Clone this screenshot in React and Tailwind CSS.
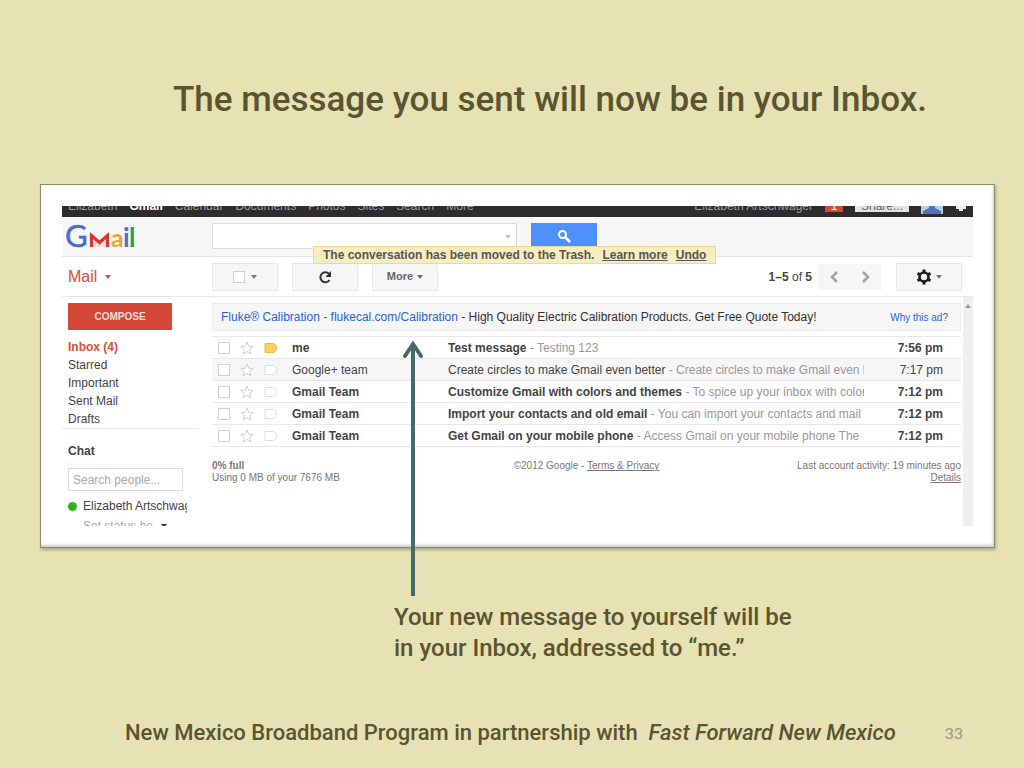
const navLinks = ['Elizabeth', 'Gmail', 'Calendar', 'Documents', 'Photos', 'Sites', 'Search', 'More']

const folders = ['Starred', 'Important', 'Sent Mail', 'Drafts']

const messages = [
  { id: 1, from: 'me', subject: 'Test message', snippet: 'Testing 123', time: '7:56 pm', unread: true, important: true },
  { id: 2, from: 'Google+ team', subject: 'Create circles to make Gmail even better', snippet: 'Create circles to make Gmail even b', time: '7:17 pm' },
  { id: 3, from: 'Gmail Team', subject: 'Customize Gmail with colors and themes', snippet: 'To spice up your inbox with color', time: '7:12 pm', unread: true },
  { id: 4, from: 'Gmail Team', subject: 'Import your contacts and old email', snippet: 'You can import your contacts and mail', time: '7:12 pm', unread: true },
  { id: 5, from: 'Gmail Team', subject: 'Get Gmail on your mobile phone', snippet: 'Access Gmail on your mobile phone The', time: '7:12 pm', unread: true },
]

function Caret({ className }) {
  return (
    <svg viewBox="0 0 6 4" className={`w-[6px] h-1 shrink-0 ${className}`} fill="currentColor">
      <path d="M0 0h6L3 4z" />
    </svg>
  )
}

function GmailLogo() {
  return (
    <svg viewBox="0 0 70 30" className="w-[70px] h-[30px]" fontFamily="Lato, sans-serif">
      <text x="-1" y="26" fontSize="31" fill="#4470cf" stroke="#4470cf" strokeWidth=".5">G</text>
      <path d="M25.500 26V14.500l8 7 8-7V26" fill="#f6dedb" stroke="#d8392f" strokeWidth="3.200" />
      <text x="45" y="26" fontSize="25" fontWeight="700" fill="#e3ab2c">a</text>
      <text x="57" y="26" fontSize="26" fontWeight="700" fill="#3f74d8">i</text>
      <text x="63" y="26" fontSize="26" fontWeight="700" fill="#2f9e4f">l</text>
    </svg>
  )
}

function Star() {
  return (
    <svg viewBox="0 0 14 14" className="w-[14px] h-[14px]" fill="#fff" stroke="#cfcfcf">
      <path d="M7 1l1.700 4.200 4.500.3-3.500 2.900 1.200 4.400L7 10.400l-3.900 2.400 1.200-4.400L.8 5.500l4.500-.3z" />
    </svg>
  )
}

function Tag({ important }) {
  return (
    <svg viewBox="0 0 14 10" className="w-[14px] h-[10px]" fill={important ? '#fbd160' : '#fff'} stroke={important ? '#e9b94c' : '#dcdcdc'}>
      <path d="M1 .5h8.500q1 0 1.600 1L13 5l-1.900 3.500q-.6 1-1.600 1H1z" />
    </svg>
  )
}

function Gear() {
  return (
    <svg viewBox="0 0 16 16" className="w-4 h-4" fill="none" stroke="#1c1c1c">
      <circle cx="8" cy="8" r="4.500" strokeWidth="2.600" />
      <path d="M8 .5v2.500M8 13v2.500M1.500 4.250l2.200 1.250M12.300 10.500l2.200 1.250M1.500 11.750l2.200-1.250M12.300 5.500l2.200-1.250" strokeWidth="3" />
    </svg>
  )
}

function TopBar() {
  return (
    <div className="h-[11px] overflow-hidden bg-[#2d2d2d] flex items-start justify-between px-[6px] text-[12px] leading-0 text-[#9c9c9c]">
      <nav className="flex gap-3">
        {navLinks.map((link) => (
          <a key={link} href="#" className={link === 'Gmail' ? 'font-bold text-white' : ''}>{link}</a>
        ))}
      </nav>
      <div className="flex items-start">
        <span className="mr-3">Elizabeth Artschwager</span>
        <span className="w-[18px] h-[6px] mr-3 bg-[#d14836] text-white text-center">1</span>
        <span className="w-[54px] h-[6px] mr-3 bg-[#e4e4e4] text-[#666] text-center">Share...</span>
        <svg viewBox="0 0 22 8" className="w-[22px] h-2 mr-3">
          <path d="M0 0h22v8H0z" fill="#b9cdec" />
          <path d="M8 0h6v2l6 3v3H2V5l6-3z" fill="#5474b4" />
        </svg>
        <svg viewBox="0 0 12 6" className="w-3 h-[6px]" fill="#eee">
          <path d="M1 0h10v3H8v2H4V3H1z" />
        </svg>
      </div>
    </div>
  )
}

function Header() {
  return (
    <div className="relative h-10 bg-[#f6f6f6] border-b border-[#e5e5e5] flex items-start">
      <div className="w-[150px] shrink-0 pl-1 pt-1">
        <GmailLogo />
      </div>
      <div className="relative w-[305px] mt-[6px]">
        <input aria-label="Search mail" className="block w-full h-[26px] bg-white border border-[#dcdcdc]" />
        <Caret className="absolute right-[6px] top-3 text-[#c4c4c4]" />
      </div>
      <button aria-label="Search" className="ml-[14px] mt-[6px] w-[66px] h-[26px] bg-[#4d90fe] flex items-center justify-center">
        <svg viewBox="0 0 14 14" className="w-[14px] h-[14px]" fill="none" stroke="#fff">
          <circle cx="5.500" cy="5.500" r="3.500" strokeWidth="2" />
          <path d="M8 8l5 5" strokeWidth="2.600" />
        </svg>
      </button>
      {/* Notification */}
      <div className="absolute left-[251px] top-[29px] h-[18px] px-[9px] bg-[#f9edbe] border border-[#f0d98c] text-[12px] leading-4 font-bold text-[#555] whitespace-nowrap">
        The conversation has been moved to the Trash.
        <a href="#" className="ml-2 underline">Learn more</a>
        <a href="#" className="ml-2 underline">Undo</a>
      </div>
    </div>
  )
}

function ToolButton({ children, label }) {
  return (
    <button aria-label={label} className="w-[66px] h-7 bg-[#f6f6f6] border border-[#e8e8e8] flex items-center justify-center gap-1 text-[11px] font-bold text-[#666]">
      {children}
    </button>
  )
}

function Toolbar() {
  return (
    <div className="h-10 border-b border-[#e8e8e8] flex items-center">
      <button className="w-[150px] shrink-0 pl-[6px] flex items-center gap-2 text-[16px] text-[#dd4b39]">
        Mail <Caret className="text-[#dd4b39]" />
      </button>
      <div className="flex gap-[14px]">
        <div className="w-[66px] h-7 bg-[#f6f6f6] border border-[#e8e8e8] flex items-center justify-center gap-[6px]">
          <input type="checkbox" aria-label="Select all" className="appearance-none w-3 h-3 border border-[#cfcfcf] bg-white" />
          <Caret className="text-[#777]" />
        </div>
        <ToolButton label="Refresh">
          <svg viewBox="0 0 14 14" className="w-[14px] h-[14px]" fill="none" stroke="#333" strokeWidth="2">
            <path d="M11.500 10A5 5 0 1 1 11 3.800" />
            <path d="M13 1v6H7.500z" fill="#333" stroke="none" />
          </svg>
        </ToolButton>
        <ToolButton>More <Caret className="text-[#666]" /></ToolButton>
      </div>
      <div className="ml-auto mr-[11px] flex items-center">
        <p className="mr-[6px] text-[12px] text-[#444]"><b>1–5</b> of <b>5</b></p>
        <div className="flex mr-[14px]">
          <button aria-label="Newer" className="w-8 h-[26px] bg-[#f6f6f6] flex items-center justify-center">
            <svg viewBox="0 0 10 12" className="w-[10px] h-3" fill="none" stroke="#a5a5a5" strokeWidth="2.600"><path d="M8 1L3 6l5 5" /></svg>
          </button>
          <button aria-label="Older" className="w-8 h-[26px] bg-[#f6f6f6] flex items-center justify-center">
            <svg viewBox="0 0 10 12" className="w-[10px] h-3" fill="none" stroke="#a5a5a5" strokeWidth="2.600"><path d="M2 1l5 5-5 5" /></svg>
          </button>
        </div>
        <ToolButton label="Settings"><Gear /><Caret className="text-[#777]" /></ToolButton>
      </div>
    </div>
  )
}

function Sidebar() {
  return (
    <aside className="w-[136px] mr-[14px] shrink-0 pt-[6px] text-[12px] leading-[18px] text-[#444]">
      <button className="block ml-[6px] w-[104px] h-[27px] bg-[#d34836] text-[10px] font-bold text-[#f9dcd8]">COMPOSE</button>
      <ul className="mt-2 pl-[6px]">
        <li><a href="#" className="font-bold text-[#dd4b39]">Inbox (4)</a></li>
        {folders.map((name) => (
          <li key={name}><a href="#">{name}</a></li>
        ))}
      </ul>
      <div className="border-t border-[#e8e8e8] pt-[13px] pl-[6px] overflow-hidden">
        <h2 className="font-bold">Chat</h2>
        <input aria-label="Search people" placeholder="Search people..." className="block mt-2 w-[115px] h-[23px] px-1 border border-[#dcdcdc] placeholder:text-[#aaa]" />
        <div className="mt-[6px] flex items-center gap-[6px]">
          <span className="w-[9px] h-[9px] shrink-0 rounded-full bg-[#2fb417]" />
          <span className="w-[104px] overflow-hidden whitespace-nowrap">Elizabeth Artschwager</span>
        </div>
        <div className="mt-[5px] h-[6px] pl-[15px] overflow-hidden flex items-start gap-2 leading-3 text-[#aaa]">
          Set status he <Caret className="mt-1 text-[#444]" />
        </div>
      </div>
    </aside>
  )
}

function Inbox() {
  return (
    <main className="flex-1 min-w-0 pt-[6px]">
      <div className="h-7 pl-2 pr-3 bg-[#f6f6f6] border border-[#ececec] flex items-center justify-between whitespace-nowrap text-[12px] text-[#333]">
        <p>
          <a href="#" className="text-[#2a62d8]">Fluke® Calibration - flukecal.com/Calibration</a> - High Quality Electric Calibration Products. Get Free Quote Today!
        </p>
        <a href="#" className="text-[10px] text-[#2a62d8]">Why this ad?</a>
      </div>
      <table className="mt-[5px] w-full table-fixed border-collapse text-[12px] leading-4 text-[#444]">
        <colgroup>
          <col className="w-20" />
          <col className="w-[156px]" />
          <col />
          <col className="w-[97px]" />
        </colgroup>
        <tbody>
          {messages.map((m) => (
            <tr key={m.id} className={m.unread ? 'h-[22px] border-y border-[#e8e8e8] font-bold' : 'h-[22px] border-y border-[#e8e8e8] bg-[#f6f6f6]'}>
              <td className="p-0">
                <div className="flex items-center gap-[10px] pl-[6px]">
                  <input type="checkbox" aria-label={`Select ${m.subject}`} className="appearance-none w-3 h-3 border border-[#d0d0d0] bg-white" />
                  <Star />
                  <Tag important={m.important} />
                </div>
              </td>
              <td className="p-0">{m.from}</td>
              <td className="p-0 overflow-hidden whitespace-nowrap">
                {m.subject}<span className="font-normal text-[#999]"> - {m.snippet}</span>
              </td>
              <td className="p-0 pr-[18px] text-right">{m.time}</td>
            </tr>
          ))}
        </tbody>
      </table>
      <footer className="mt-[13px] grid grid-cols-3 text-[10px] leading-3 text-[#777]">
        <p><b>0% full</b><br />Using 0 MB of your 7676 MB</p>
        <p className="text-center">©2012 Google - <a href="#" className="underline">Terms &amp; Privacy</a></p>
        <p className="text-right">Last account activity: 19 minutes ago<br /><a href="#" className="underline">Details</a></p>
      </footer>
    </main>
  )
}

export default function App() {
  return (
    <div className="min-h-screen flex flex-col bg-[#e6e2b3] text-[#5a5430] font-medium font-[Roboto,sans-serif]">
      <h1 className="pt-[76px] pl-[76px] text-center text-[35px] leading-[48px]">
        The message you sent will now be in your Inbox.
      </h1>

      <section className="relative mt-[60px] ml-10 mr-[29px] p-[21px] bg-white border border-[#8f8c72] shadow-[1px_2px_3px_#0004,inset_-1px_-2px_3px_#0003] font-normal font-['Liberation_Sans',sans-serif]">
        <TopBar />
        <Header />
        <Toolbar />
        <div className="flex">
          <Sidebar />
          <Inbox />
          <div className="ml-[2px] w-[10px] bg-[#efefef] flex justify-center pt-[7px]">
            <Caret className="rotate-180 text-[#999]" />
          </div>
        </div>

        {/* Arrow from the caption to the new message */}
        <svg viewBox="0 0 24 256" className="absolute left-[360px] top-[155px] w-6 h-64 pointer-events-none" fill="none" stroke="#476a69" strokeWidth="4">
          <path d="M12 256V4" />
          <path d="M4 16l8-12 8 12" strokeLinecap="round" />
        </svg>
      </section>

      <p className="mt-[54px] ml-[394px] text-[24px] leading-[31px]">
        Your new message to yourself will be<br />in your Inbox, addressed to “me.”
      </p>

      <footer className="mt-auto mb-5 pl-[125px] pr-[61px] flex items-center justify-between text-[22px] leading-[30px]">
        <p className="whitespace-pre">New Mexico Broadband Program in partnership with  <em>Fast Forward New Mexico</em></p>
        <span className="text-[16px] font-normal text-[#9b9886] font-[Lato,sans-serif]">33</span>
      </footer>
    </div>
  )
}
